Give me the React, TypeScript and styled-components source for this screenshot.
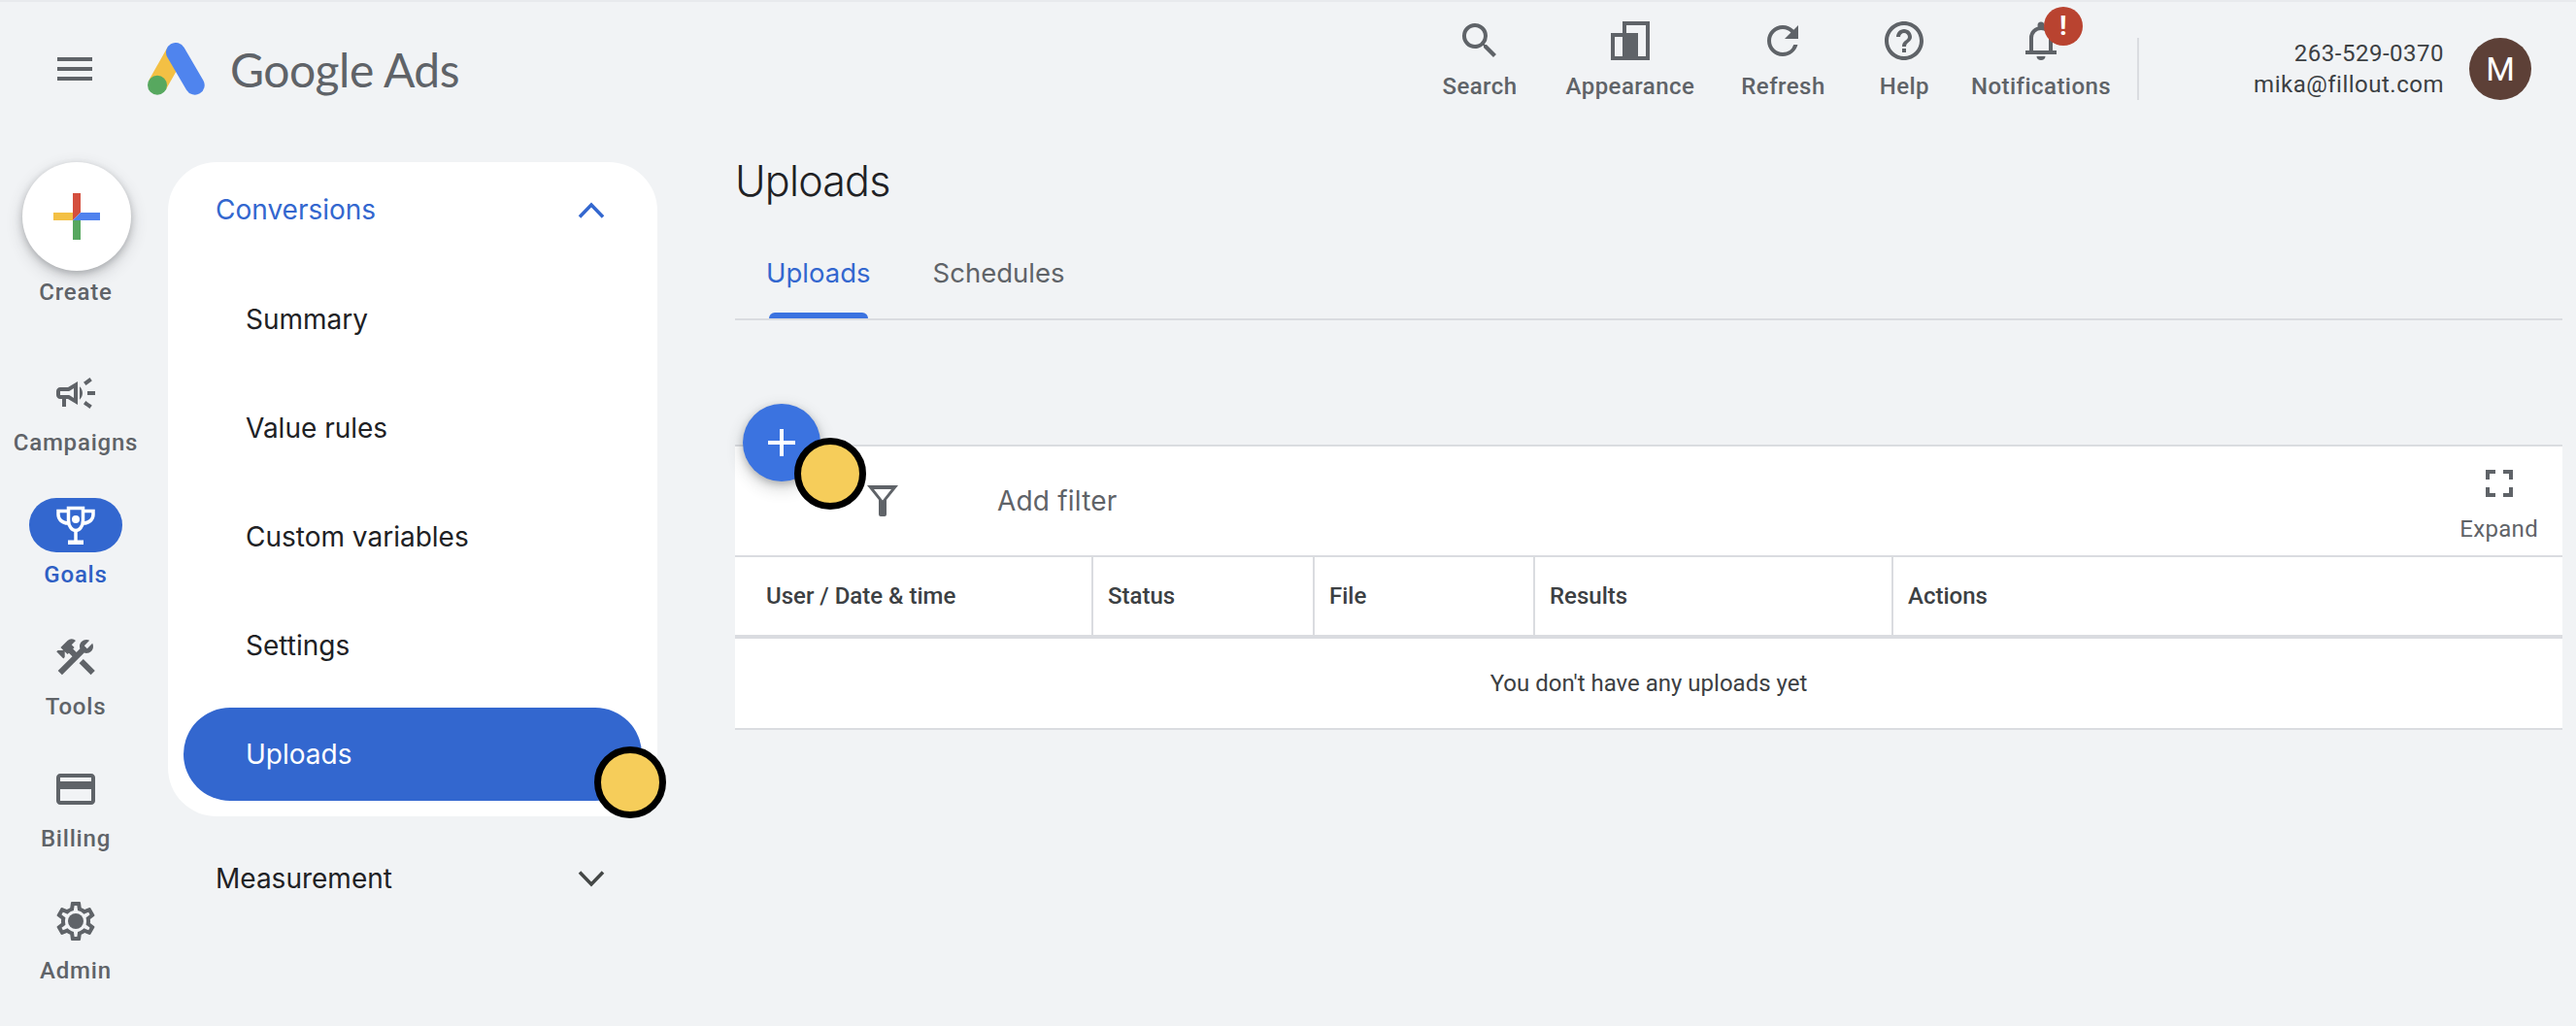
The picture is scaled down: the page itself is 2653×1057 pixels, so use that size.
import React from 'react'
import styled, { createGlobalStyle } from 'styled-components'
import {
  MdMenu, MdSearch, MdRefresh, MdHelpOutline, MdOutlineCampaign,
  MdConstruction, MdOutlineCreditCard, MdAdd, MdFullscreen,
} from 'react-icons/md'

const GlobalStyle = createGlobalStyle`
  html, body { margin: 0; padding: 0; background: #f1f3f5; }
  body { font-family: Roboto, "Liberation Sans", sans-serif; overflow: hidden; }
  * { box-sizing: border-box; }
`

const Page = styled.div`
  width: 2653px;
  height: 1057px;
  overflow: hidden;
  background: #f1f3f5;
  border-top: 2px solid #e8eaed;
`

/* ---------- header ---------- */
const Header = styled.header`
  display: flex;
  align-items: center;
  height: 126px;
  padding: 12px 46px 0 53px;
  color: #5f6368;
`

const Burger = styled.div`
  display: flex;
  width: 48px;
  height: 48px;
  font-size: 48px;
  color: #5f6368;
`

const Brand = styled.div`
  display: flex;
  align-items: center;
  margin-left: 51px;
  gap: 26px;
`

const BrandName = styled.span`
  font-family: Lato, sans-serif;
  font-size: 48px;
  font-weight: 400;
  color: #5f6368;
  letter-spacing: -0.5px;
  white-space: nowrap;
`

const RightGroup = styled.div`
  display: flex;
  align-items: center;
  align-self: stretch;
  margin-left: auto;
`

const Tools = styled.div`
  display: flex;
  align-items: flex-start;
  align-self: flex-start;
  margin-top: 4px;
  transform: translateX(-1px);
`

const ToolItem = styled.div<{ $gap: number }>`
  position: relative;
  display: flex;
  flex-direction: column;
  align-items: center;
  margin-left: ${p => p.$gap}px;
  font-size: 24px;
  font-weight: 500;
  letter-spacing: 0.45px;
  line-height: 28px;
  color: #5f6368;
  svg { display: block; }
`

const ToolIcon = styled.div`
  display: flex;
  height: 48px;
  margin-bottom: 9px;
  align-items: center;
  justify-content: center;
`

const Badge = styled.span`
  position: absolute;
  top: -11px;
  left: 75px;
  display: flex;
  width: 40px;
  height: 40px;
  border-radius: 50%;
  align-items: center;
  justify-content: center;
  background: #b94330;
  color: #fff;
  font-size: 28px;
  font-weight: 700;
`

const VDivider = styled.div`
  width: 2px;
  height: 64px;
  margin-left: 26px;
  background: #dadce0;
`

const Account = styled.div`
  display: flex;
  flex-direction: column;
  align-items: flex-end;
  margin-left: 118px;
  font-size: 24px;
  line-height: 32px;
  letter-spacing: 0.5px;
  color: #3c4043;
`

const Avatar = styled.div`
  display: flex;
  width: 64px;
  height: 64px;
  margin-left: 26px;
  border-radius: 50%;
  align-items: center;
  justify-content: center;
  background: #5d4037;
  color: #fff;
  font-size: 34px;
`

/* ---------- body ---------- */
const Body = styled.div`
  display: flex;
  align-items: flex-start;
`

const Rail = styled.nav`
  display: flex;
  flex-direction: column;
  align-items: center;
  width: 156px;
  padding-top: 39px;
  flex: none;
`

const CreateFab = styled.div`
  display: flex;
  width: 112px;
  height: 112px;
  border-radius: 50%;
  align-items: center;
  justify-content: center;
  background: #fff;
  box-shadow: 0 3px 7px rgba(60, 64, 67, 0.3), 0 6px 14px 4px rgba(60, 64, 67, 0.13);
  transform: translateX(1px);
`

const RailLabel = styled.span<{ $active?: boolean }>`
  display: block;
  font-size: 24px;
  line-height: 28px;
  font-weight: 500;
  letter-spacing: 0.8px;
  color: ${p => (p.$active ? '#2f5fc4' : '#5f6368')};
`

const CreateBox = styled.div`
  display: flex;
  flex-direction: column;
  align-items: center;
  gap: 8px;
  height: 210px;
`

const RailItem = styled.div`
  display: flex;
  flex-direction: column;
  align-items: center;
  height: 136px;
`

const RailIcon = styled.div<{ $active?: boolean }>`
  display: flex;
  width: 96px;
  height: 56px;
  margin-bottom: 9px;
  border-radius: 28px;
  align-items: center;
  justify-content: center;
  color: ${p => (p.$active ? '#fff' : '#5f6368')};
  background: ${p => (p.$active ? '#3367cf' : 'transparent')};
`

const SideColumn = styled.div`
  width: 504px;
  margin: 39px 0 0 17px;
  flex: none;
`

const SideAnchor = styled.div`
  position: relative;
`

const SideCard = styled.div`
  padding: 0 16px 16px;
  border-radius: 50px;
  background: #fff;
`

const SideHead = styled.div<{ $active?: boolean; $flat?: boolean }>`
  display: flex;
  align-items: center;
  justify-content: space-between;
  height: 98px;
  margin-top: ${p => (p.$flat ? 15 : 0)}px;
  padding: 0 ${p => (p.$flat ? 54 : 38)}px 0 ${p => (p.$flat ? 49 : 33)}px;
  font-family: Inter, sans-serif;
  font-size: 28px;
  color: ${p => (p.$active ? '#3367cf' : '#202124')};
`

const SideItem = styled.div<{ $active?: boolean }>`
  display: flex;
  align-items: center;
  height: 96px;
  margin-top: 16px;
  padding-left: 64px;
  border-radius: 48px;
  font-family: Inter, sans-serif;
  font-size: 28px;
  color: ${p => (p.$active ? '#fff' : '#202124')};
  background: ${p => (p.$active ? '#3367cf' : 'transparent')};
  &:first-of-type { margin-top: 8px; }
`

const Main = styled.main`
  flex: 1;
  min-width: 0;
  margin: 0 14px 0 80px;
`

const Title = styled.h1`
  margin: 0;
  padding-top: 32px;
  font-family: Inter, sans-serif;
  font-size: 43px;
  line-height: 52px;
  font-weight: 300;
  letter-spacing: -0.8px;
  color: #202124;
`

const Tabs = styled.div`
  display: flex;
  height: 118px;
  padding: 0 0 0 32px;
  gap: 64px;
  border-bottom: 2px solid #dadce0;
`

const Tab = styled.div<{ $active?: boolean }>`
  position: relative;
  padding-top: 51px;
  font-family: Inter, sans-serif;
  font-size: 27.5px;
  line-height: 36px;
  color: ${p => (p.$active ? '#3367cf' : '#5f6368')};
  ${p => p.$active && `
    &::after {
      content: "";
      position: absolute;
      left: 3px;
      right: 3px;
      bottom: 0;
      height: 6px;
      border-radius: 6px 6px 0 0;
      background: #3b73e0;
    }
  `}
`

const Panel = styled.section`
  position: relative;
  margin-top: 128px;
  border-top: 2px solid #dadce0;
  background: #fff;
`

const AddFab = styled.div`
  position: absolute;
  top: -44px;
  left: 8px;
  display: flex;
  width: 80px;
  height: 80px;
  border-radius: 50%;
  align-items: center;
  justify-content: center;
  background: #3b73e0;
  color: #fff;
  box-shadow: 0 3px 7px rgba(60, 64, 67, 0.3), 0 6px 14px 4px rgba(60, 64, 67, 0.15);
`

const Marker = styled.span`
  position: absolute;
  width: 74px;
  height: 74px;
  border: 7px solid #000;
  border-radius: 50%;
  background: #f6cd5a;
  z-index: 2;
`

const PanelMarker = styled(Marker)`
  top: -9px;
  left: 61px;
`

const NavMarker = styled(Marker)`
  top: 602px;
  left: 439px;
`

const FilterBar = styled.div`
  display: flex;
  align-items: center;
  height: 112px;
  padding: 0 25px 0 136px;
  color: #5f6368;
`

const FilterLabel = styled.span`
  margin-left: 102px;
  font-family: Inter, sans-serif;
  font-size: 28px;
  letter-spacing: 0.2px;
  color: #5f6368;
`

const Expand = styled.div`
  display: flex;
  flex-direction: column;
  align-items: center;
  margin-left: auto;
  font-size: 24px;
  line-height: 28px;
  letter-spacing: 0.3px;
  color: #5f6368;
  svg { display: block; margin-bottom: 9px; }
`

const HeadRow = styled.div`
  display: grid;
  grid-template-columns: 367px 228px 227px 369px 1fr;
  height: 86px;
  border-top: 2px solid #dadce0;
  border-bottom: 4px solid #dadce0;
`

const HeadCell = styled.div<{ $first?: boolean }>`
  display: flex;
  align-items: center;
  padding-left: ${p => (p.$first ? 32 : 15)}px;
  border-left: ${p => (p.$first ? 'none' : '2px solid #dadce0')};
  font-size: 24px;
  font-weight: 500;
  color: #3c4043;
`

const EmptyRow = styled.div`
  display: flex;
  height: 94px;
  align-items: center;
  justify-content: center;
  border-bottom: 2px solid #dadce0;
  font-size: 24px;
  color: #3c4043;
`

const Logo = () => (
  <svg width="59" height="54" viewBox="0 0 59 54">
    <line x1="29" y1="10" x2="10" y2="43.7" stroke="#f3c044" strokeWidth="20" />
    <line x1="29" y1="10" x2="48.700" y2="43.700" stroke="#4f84ee" strokeWidth="20" strokeLinecap="round" />
    <circle cx="10" cy="43.700" r="10" fill="#57a85f" />
  </svg>
)

const ColorPlus = () => (
  <svg width="48" height="48" viewBox="0 0 48 48">
    <polygon points="20,0 28,0 28,20 20,28" fill="#d44f3e" />
    <polygon points="0,20 20,20 20,28 0,28" fill="#f3c044" />
    <polygon points="28,20 48,20 48,28 20,28" fill="#5082ee" />
    <polygon points="20,28 28,28 28,48 20,48" fill="#57a85f" />
  </svg>
)

const AppearanceIcon = () => (
  <svg width="40" height="40" viewBox="0 0 40 40" fill="#5f6368">
    <path fillRule="evenodd" d="M12 0H40V40H0V12H12ZM16 4V12H28V36H36V4ZM4 16V36H12V16Z" />
  </svg>
)

const BellIcon = () => (
  <svg width="32" height="40" viewBox="0 0 32 40" fill="#5f6368">
    <path d="M6 31V17a10 10 0 0 1 20 0V31" fill="none" stroke="#5f6368" strokeWidth="4" />
    <circle cx="16" cy="4" r="3.500" />
    <rect x="0" y="30" width="32" height="4" />
    <path d="M11.500 36H20.500C20.500 38.500 18.500 40 16 40C13.500 40 11.500 38.500 11.500 36Z" />
  </svg>
)

const Trophy = () => (
  <svg width="40" height="40" viewBox="0 0 40 40" fill="none" stroke="#fff" strokeWidth="3.500">
    <path d="M12.500 2.500H27.500V15C27.500 21 24 25.500 20 25.500C16 25.500 12.500 21 12.500 15Z" />
    <path d="M12 5.500H2V9C2 14 6 18 12 18" />
    <path d="M28 5.500H38V9C38 14 34 18 28 18" />
    <path d="M20 26V36" />
    <rect x="12" y="35.500" width="16" height="4.500" fill="#fff" stroke="none" />
    <circle cx="20" cy="14" r="4" fill="#fff" stroke="none" />
  </svg>
)

const FunnelIcon = () => (
  <svg width="32" height="32" viewBox="0 0 32 32" fill="#5f6368">
    <path fillRule="evenodd" d="M0 0H32L20 15V30A2 2 0 0 1 18 32H14A2 2 0 0 1 12 30V15ZM7 4L16 15.500L25 4Z" />
  </svg>
)

const GearIcon = () => (
  <svg width="48" height="48" viewBox="0 0 24 24" fill="currentColor">
    <path d="M19.43 12.98c.04-.32.07-.64.07-.98 0-.34-.03-.66-.07-.98l2.11-1.65c.19-.15.24-.42.12-.64l-2-3.46c-.09-.16-.26-.25-.44-.25-.06 0-.12.01-.17.03l-2.49 1c-.52-.4-1.08-.73-1.69-.98l-.38-2.65C14.46 2.18 14.25 2 14 2h-4c-.25 0-.46.18-.49.42l-.38 2.65c-.61.25-1.17.59-1.69.98l-2.49-1c-.06-.02-.12-.03-.18-.03-.17 0-.34.09-.43.25l-2 3.46c-.13.22-.07.49.12.64l2.11 1.65c-.04.32-.07.65-.07.98 0 .33.03.66.07.98l-2.11 1.65c-.19.15-.24.42-.12.64l2 3.46c.09.16.26.25.44.25.06 0 .12-.01.17-.03l2.49-1c.52.4 1.08.73 1.69.98l.38 2.65c.03.24.24.42.49.42h4c.25 0 .46-.18.49-.42l.38-2.65c.61-.25 1.17-.59 1.69-.98l2.49 1c.06.02.12.03.18.03.17 0 .34-.09.43-.25l2-3.46c.12-.22.07-.49-.12-.64l-2.11-1.65zm-1.98-1.71c.04.31.05.52.05.73 0 .21-.02.43-.05.73l-.14 1.13.89.7 1.08.84-.7 1.21-1.27-.51-1.04-.42-.9.68c-.43.32-.84.56-1.25.73l-1.06.43-.16 1.13-.2 1.35h-1.4l-.19-1.35-.16-1.13-1.06-.43c-.43-.18-.83-.41-1.23-.71l-.91-.7-1.06.43-1.27.51-.7-1.21 1.08-.84.89-.7-.14-1.13c-.03-.31-.05-.54-.05-.74s.02-.43.05-.73l.14-1.13-.89-.7-1.08-.84.7-1.21 1.27.51 1.04.42.9-.68c.43-.32.84-.56 1.25-.73l1.06-.43.16-1.13.2-1.35h1.39l.19 1.35.16 1.13 1.06.43c.43.18.83.41 1.23.71l.91.7 1.06-.43 1.27-.51.7 1.21-1.07.85-.89.7.14 1.13z" />
    <circle cx="12" cy="12" r="4" />
  </svg>
)

const Chevron = ({ up, color }: { up?: boolean; color: string }) => (
  <svg width="28" height="17" viewBox="0 0 28 17" fill="none" stroke={color} strokeWidth="3.500">
    <path d={up ? 'M2 15.500L14 3L26 15.500' : 'M2 1.500L14 14L26 1.500'} />
  </svg>
)

const toolItems = [
  { label: 'Search', gap: 0, icon: <MdSearch size={48} /> },
  { label: 'Appearance', gap: 50, icon: <AppearanceIcon /> },
  { label: 'Refresh', gap: 48, icon: <MdRefresh size={48} /> },
  { label: 'Help', gap: 56, icon: <MdHelpOutline size={48} /> },
  { label: 'Notifications', gap: 43, icon: <BellIcon /> },
]

const railItems = [
  { label: 'Campaigns', icon: <MdOutlineCampaign size={48} /> },
  { label: 'Goals', active: true, icon: <Trophy /> },
  { label: 'Tools', icon: <MdConstruction size={48} /> },
  { label: 'Billing', icon: <MdOutlineCreditCard size={48} /> },
  { label: 'Admin', icon: <GearIcon /> },
]

const sideItems = ['Summary', 'Value rules', 'Custom variables', 'Settings', 'Uploads']
const columns = ['User / Date & time', 'Status', 'File', 'Results', 'Actions']

export default function App() {
  return (
    <Page>
      <GlobalStyle />
      <Header>
        <Burger><MdMenu /></Burger>
        <Brand>
          <Logo />
          <BrandName>Google Ads</BrandName>
        </Brand>
        <RightGroup>
          <Tools>
            {toolItems.map(t => (
              <ToolItem key={t.label} $gap={t.gap}>
                <ToolIcon>{t.icon}</ToolIcon>
                {t.label}
                {t.label === 'Notifications' && <Badge>!</Badge>}
              </ToolItem>
            ))}
          </Tools>
          <VDivider />
          <Account>
            <span>263-529-0370</span>
            <span>mika@fillout.com</span>
          </Account>
          <Avatar>M</Avatar>
        </RightGroup>
      </Header>
      <Body>
        <Rail>
          <CreateBox>
            <CreateFab><ColorPlus /></CreateFab>
            <RailLabel>Create</RailLabel>
          </CreateBox>
          {railItems.map(r => (
            <RailItem key={r.label}>
              <RailIcon $active={r.active}>{r.icon}</RailIcon>
              <RailLabel $active={r.active}>{r.label}</RailLabel>
            </RailItem>
          ))}
        </Rail>
        <SideColumn>
          <SideAnchor>
            <SideCard>
              <SideHead $active>
                Conversions
                <Chevron up color="#3367cf" />
              </SideHead>
              {sideItems.map(s => (
                <SideItem key={s} $active={s === 'Uploads'}>{s}</SideItem>
              ))}
            </SideCard>
            <NavMarker />
          </SideAnchor>
          <SideHead $flat>
            Measurement
            <Chevron color="#444746" />
          </SideHead>
        </SideColumn>
        <Main>
          <Title>Uploads</Title>
          <Tabs>
            <Tab $active>Uploads</Tab>
            <Tab>Schedules</Tab>
          </Tabs>
          <Panel>
            <AddFab><MdAdd size={48} /></AddFab>
            <PanelMarker />
            <FilterBar>
              <FunnelIcon />
              <FilterLabel>Add filter</FilterLabel>
              <Expand>
                <MdFullscreen size={48} />
                Expand
              </Expand>
            </FilterBar>
            <HeadRow>
              {columns.map((c, i) => (
                <HeadCell key={c} $first={i === 0}>{c}</HeadCell>
              ))}
            </HeadRow>
            <EmptyRow>You don't have any uploads yet</EmptyRow>
          </Panel>
        </Main>
      </Body>
    </Page>
  )
}
